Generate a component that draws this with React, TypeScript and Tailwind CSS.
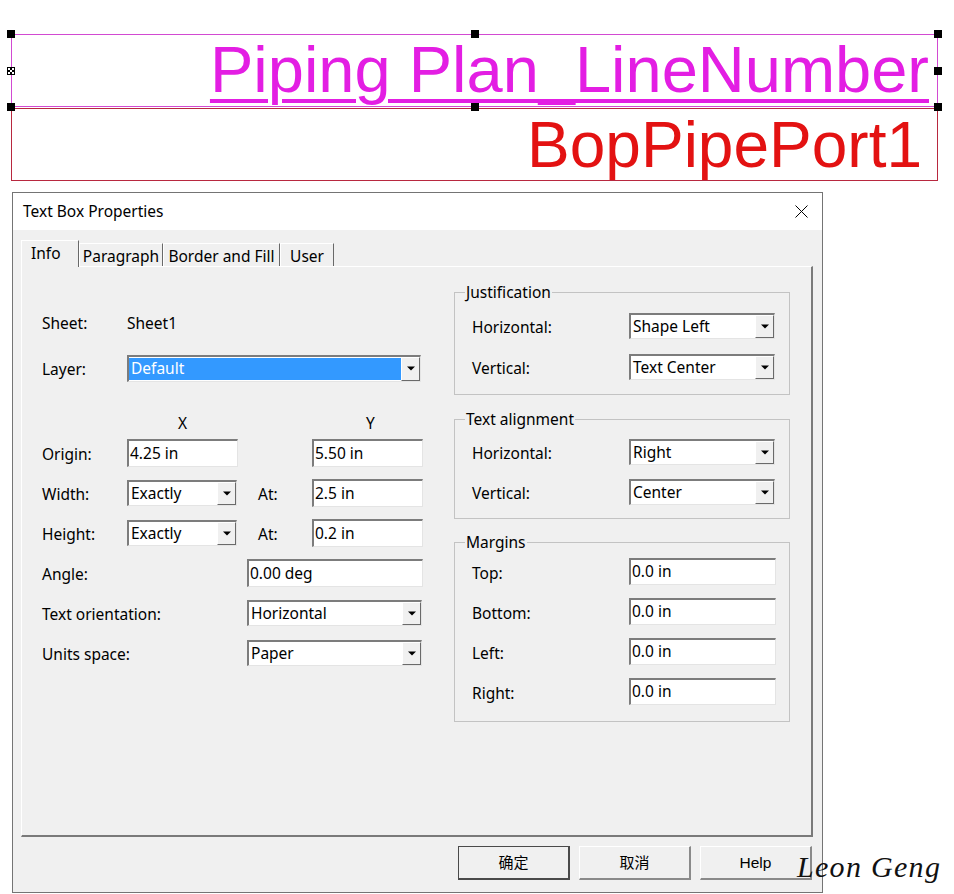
import React from "react";

// sunken 3D edge used by edit boxes and combo boxes
const sunken =
  "border-t-2 border-l-2 border-t-[#7c7c7c] border-l-[#7c7c7c] border-r border-b border-r-[#e4e4e4] border-b-[#e4e4e4]";

const DropArrow = () => (
  <div className="flex h-full w-[19px] shrink-0 items-center justify-center border-t border-l border-r border-b border-t-white border-l-white border-r-[#6a6a6a] border-b-[#6a6a6a] bg-[#f0f0f0]">
    <svg width="8" height="5" viewBox="0 0 8 5">
      <path d="M0 0.5h8L4 4.5z" fill="#000" />
    </svg>
  </div>
);

type BoxProps = { value: string; className?: string; selected?: boolean };

const Combo = ({ value, className = "", selected = false }: BoxProps) => (
  <div className={`flex bg-white ${sunken} ${className}`}>
    <div
      className={`flex flex-1 items-center pl-[2px] ${
        selected ? "my-px bg-[#3399ff] text-white" : ""
      }`}
    >
      {value}
    </div>
    <DropArrow />
  </div>
);

const Edit = ({ value, className = "" }: BoxProps) => (
  <div className={`flex items-center bg-white pl-px ${sunken} ${className}`}>{value}</div>
);

// static caption; the padding drops it onto the same line as the box text
const Label = ({ children, className = "" }: { children: React.ReactNode; className?: string }) => (
  <span className={`pt-[4px] ${className}`}>{children}</span>
);

const Group = ({
  title,
  className = "",
  children,
}: {
  title: string;
  className?: string;
  children: React.ReactNode;
}) => (
  <div className={`relative w-[336px] border border-[#c3c3c3] pl-[17px] ${className}`}>
    <span className="absolute left-[10px] top-[-12px] bg-[#f0f0f0] px-px leading-[22px]">
      {title}
    </span>
    {children}
  </div>
);

const Handle = ({ className }: { className: string }) => (
  <div className={`absolute h-2 w-2 bg-black ${className}`} />
);

const tabs = [
  { label: "Paragraph", w: "w-[84px]" },
  { label: "Border and Fill", w: "w-[117px]" },
  { label: "User", w: "w-[54px]" },
];

const App = () => {
  return (
    <div className="relative h-[894px] w-[954px] overflow-hidden bg-white font-['Noto_Sans','Noto_Sans_CJK_SC',sans-serif] text-[15.5px] text-black">
      {/* text boxes on the drawing sheet */}
      <div className="pl-[11px] pt-[34px] font-['Liberation_Sans',Arial,sans-serif]">
        <div className="relative h-[73px] w-[927px] border border-[#d24ad2] pr-[8px] pt-[2px] text-right text-[65px] leading-none text-[#e31ee3]">
          <span className="underline decoration-4 underline-offset-[7px]">
            Piping Plan_LineNumber
          </span>
          <Handle className="left-[-5px] top-[-5px]" />
          <Handle className="left-1/2 top-[-5px] -translate-x-1/2" />
          <Handle className="right-[-5px] top-[-5px]" />
          <Handle className="right-[-5px] top-1/2 -translate-y-1/2" />
          <Handle className="bottom-[-5px] left-[-5px]" />
          <Handle className="bottom-[-5px] left-1/2 -translate-x-1/2" />
          <Handle className="bottom-[-5px] right-[-5px]" />
          <svg
            className="absolute left-[-5px] top-1/2 -translate-y-1/2"
            width="8"
            height="8"
            viewBox="0 0 8 8"
          >
            <rect width="8" height="8" fill="#000" />
            <rect x="1" y="1" width="2" height="2" fill="#fff" />
            <rect x="5" y="1" width="2" height="2" fill="#fff" />
            <rect x="3" y="3" width="2" height="2" fill="#fff" />
            <rect x="1" y="5" width="2" height="2" fill="#fff" />
            <rect x="5" y="5" width="2" height="2" fill="#fff" />
          </svg>
        </div>
        <div className="mt-px h-[73px] w-[927px] border border-[#b8283f] pr-[15px] pt-[4px] text-right text-[64px] leading-none text-[#e31212]">
          BopPipePort1
        </div>
      </div>

      {/* Text Box Properties dialog */}
      <div className="ml-[12px] mt-[11px] flex h-[701px] w-[811px] flex-col border border-[#747474] bg-[#f0f0f0]">
        <div className="flex h-[37px] items-center justify-between bg-white pl-[10px] pr-[14px]">
          <span>Text Box Properties</span>
          <svg width="13" height="13" viewBox="0 0 13 13">
            <path d="M0.5 0.5l12 12M12.5 0.5l-12 12" stroke="#000" strokeWidth="1" />
          </svg>
        </div>

        <div className="pl-[8px] pr-[9px] pt-[10px]">
          <div className="flex items-end leading-[22px]">
            <div className="relative z-10 -mb-px h-[27px] w-[58px] border-t border-l border-r border-t-white border-l-white border-r-[#696969] bg-[#f0f0f0] pl-[9px] pt-px">
              Info
            </div>
            {tabs.map((t) => (
              <div
                key={t.label}
                className={`flex h-[23px] ${t.w} justify-center border-t border-l border-r border-t-white border-l-white border-r-[#696969] pt-px`}
              >
                {t.label}
              </div>
            ))}
          </div>

          <div className="grid h-[571px] grid-cols-[432px_336px] border-t border-l border-r-2 border-b-2 border-t-white border-l-white border-r-[#7a7a7a] border-b-[#7a7a7a]">
            <div className="flex flex-col pl-[20px]">
              <div className="mt-[41px] flex h-[28px] items-center">
                <Label className="w-[85px]">Sheet:</Label>
                <Label>Sheet1</Label>
              </div>
              <div className="mt-[18px] flex h-[28px] items-center">
                <Label className="w-[85px]">Layer:</Label>
                <Combo value="Default" selected className="h-[27px] w-[294px]" />
              </div>
              <div className="mt-[26px] flex h-[28px] items-center">
                <Label className="ml-[85px] w-[111px] text-center">X</Label>
                <Label className="ml-[77px] w-[111px] text-center">Y</Label>
              </div>
              <div className="mt-[3px] flex h-[28px] items-center">
                <Label className="w-[85px]">Origin:</Label>
                <Edit value="4.25 in" className="h-[28px] w-[111px]" />
                <Edit value="5.50 in" className="ml-[74px] h-[28px] w-[111px]" />
              </div>
              <div className="mt-[12px] flex h-[28px] items-center">
                <Label className="w-[85px]">Width:</Label>
                <Combo value="Exactly" className="h-[26px] w-[110px]" />
                <Label className="ml-[21px] w-[54px]">At:</Label>
                <Edit value="2.5 in" className="h-[28px] w-[111px]" />
              </div>
              <div className="mt-[12px] flex h-[28px] items-center">
                <Label className="w-[85px]">Height:</Label>
                <Combo value="Exactly" className="h-[26px] w-[110px]" />
                <Label className="ml-[21px] w-[54px]">At:</Label>
                <Edit value="0.2 in" className="h-[28px] w-[111px]" />
              </div>
              <div className="mt-[12px] flex h-[28px] items-center">
                <Label className="w-[205px]">Angle:</Label>
                <Edit value="0.00 deg" className="h-[28px] w-[176px]" />
              </div>
              <div className="mt-[12px] flex h-[28px] items-center">
                <Label className="w-[205px]">Text orientation:</Label>
                <Combo value="Horizontal" className="h-[26px] w-[175px]" />
              </div>
              <div className="mt-[12px] flex h-[28px] items-center">
                <Label className="w-[205px]">Units space:</Label>
                <Combo value="Paper" className="h-[26px] w-[175px]" />
              </div>
            </div>

            <div className="flex flex-col pt-[25px]">
              <Group title="Justification" className="pb-[14px] pt-[20px]">
                <div className="flex h-[26px] items-center">
                  <Label className="w-[157px]">Horizontal:</Label>
                  <Combo value="Shape Left" className="h-[26px] w-[146px]" />
                </div>
                <div className="mt-[15px] flex h-[26px] items-center">
                  <Label className="w-[157px]">Vertical:</Label>
                  <Combo value="Text Center" className="h-[26px] w-[146px]" />
                </div>
              </Group>
              <Group title="Text alignment" className="mt-[24px] pb-[13px] pt-[19px]">
                <div className="flex h-[26px] items-center">
                  <Label className="w-[157px]">Horizontal:</Label>
                  <Combo value="Right" className="h-[26px] w-[146px]" />
                </div>
                <div className="mt-[14px] flex h-[26px] items-center">
                  <Label className="w-[157px]">Vertical:</Label>
                  <Combo value="Center" className="h-[26px] w-[146px]" />
                </div>
              </Group>
              <Group title="Margins" className="mt-[23px] pb-[16px] pt-[15px]">
                {["Top:", "Bottom:", "Left:", "Right:"].map((m, i) => (
                  <div
                    key={m}
                    className={`flex h-[27px] items-center ${i > 0 ? "mt-[13px]" : ""}`}
                  >
                    <Label className="w-[157px]">{m}</Label>
                    <Edit value="0.0 in" className="h-[27px] w-[147px]" />
                  </div>
                ))}
              </Group>
            </div>
          </div>

          <div className="mt-[9px] flex justify-end gap-[9px] pr-px">
            <button className="h-[34px] w-[112px] border border-r-2 border-b-2 border-[#4a4a4a] bg-[#f0f0f0] font-['Noto_Sans_CJK_SC',sans-serif] text-[15px]">
              确定
            </button>
            <button className="h-[34px] w-[112px] border-t border-l border-r-2 border-b-2 border-t-white border-l-white border-r-[#8a8a8a] border-b-[#8a8a8a] bg-[#f0f0f0] font-['Noto_Sans_CJK_SC',sans-serif] text-[15px]">
              取消
            </button>
            <button className="h-[34px] w-[112px] border-t border-l border-r-2 border-b-2 border-t-white border-l-white border-r-[#8a8a8a] border-b-[#8a8a8a] bg-[#f0f0f0] font-['Liberation_Sans',Arial,sans-serif] text-[15.5px]">
              Help
            </button>
          </div>
        </div>
      </div>

      <div className="absolute left-[797px] top-[852px] z-10 font-['Liberation_Serif',serif] text-[30px] italic leading-none tracking-[1.3px] text-[#111]">
        Leon Geng
      </div>
    </div>
  );
};

export default App;
